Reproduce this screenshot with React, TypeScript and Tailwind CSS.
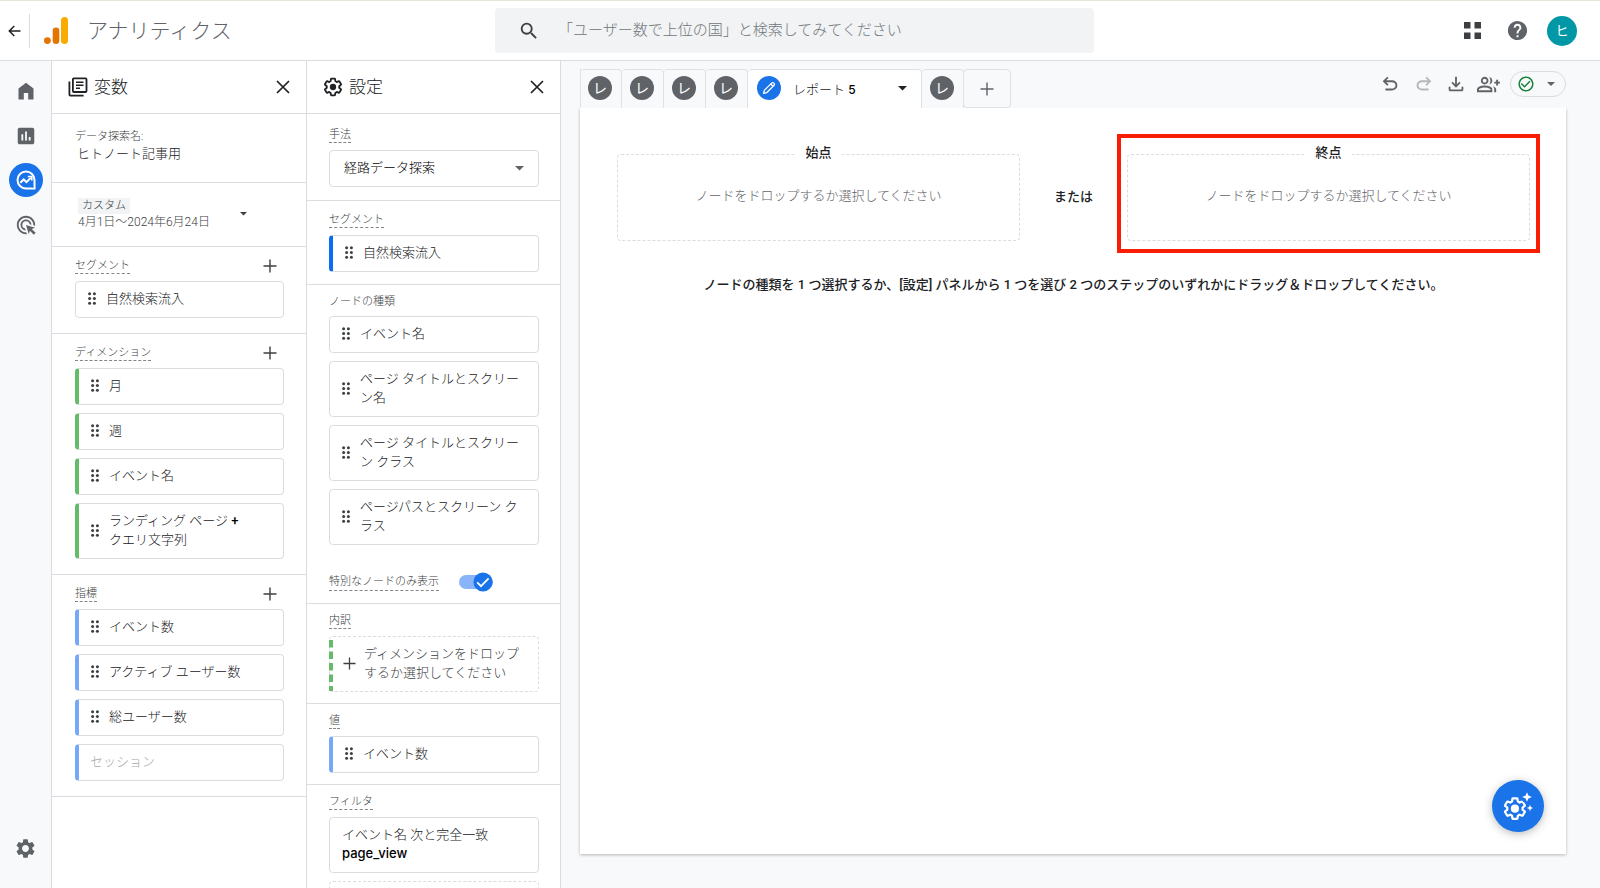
import type { ReactNode } from "react";
import { MdAdsClick, MdCheckCircleOutline, MdHelp, MdInsertChart, MdSearch, MdSettings } from "react-icons/md";

const SANS = "font-[Roboto,'Noto_Sans_CJK_JP',sans-serif]";

function Symbol({ d, className }: { d: string; className?: string }) {
  return (
    <svg viewBox="0 -960 960 960" fill="currentColor" aria-hidden="true" className={className}>
      <path d={d} />
    </svg>
  );
}

const UNDO =
  "M280-200v-80h284q63 0 109.5-40T720-420q0-60-46.5-100T564-560H312l104 104-56 56-200-200 200-200 56 56-104 104h252q97 0 169.5 63T800-420q0 94-72.5 157T564-200H280Z";
const REDO =
  "M396-200q-97 0-169.5-63T154-420q0-94 72.5-157T396-640h252L544-744l56-56 200 200-200 200-56-56 104-104H396q-63 0-109.5 40T240-420q0 60 46.5 100T396-280h284v80H396Z";
const DOWNLOAD =
  "M480-320 280-520l56-58 104 104v-326h80v326l104-104 56 58-200 200ZM240-160q-33 0-56.5-23.5T160-240v-120h80v120h480v-120h80v120q0 33-23.5 56.5T720-160H240Z";
const GROUP_ADD =
  "M500-482q29-32 44.5-73t15.5-85q0-44-15.5-85T500-798q60 8 100 53t40 105q0 60-40 105t-100 53Zm220 322v-120q0-36-16-68.5T662-406q51 18 94.5 46.5T800-280v120h-80Zm80-280v-80h-80v-80h80v-80h80v80h80v80h-80v80h-80Zm-480-40q-66 0-113-47t-47-113q0-66 47-113t113-47q66 0 113 47t47 113q0 66-47 113t-113 47ZM0-160v-112q0-34 17.5-62.5T64-378q62-31 126-46.5T320-440q66 0 130 15.5T576-378q29 15 46.5 43.5T640-272v112H0Zm320-400q33 0 56.5-23.5T400-640q0-33-23.5-56.5T320-720q-33 0-56.5 23.5T240-640q0 33 23.5 56.5T320-560ZM80-240h480v-32q0-11-5.5-20T540-306q-54-27-109-40.5T320-360q-56 0-111 13.5T100-306q-9 5-14.5 14T80-272v32Z";
const GEAR =
  "M19.43 12.98c.04-.32.07-.64.07-.98s-.03-.66-.07-.98l2.11-1.65c.19-.15.24-.42.12-.64l-2-3.46c-.09-.16-.26-.25-.44-.25-.06 0-.12.01-.17.03l-2.49 1c-.52-.4-1.08-.73-1.69-.98l-.38-2.65C14.46 2.18 14.25 2 14 2h-4c-.25 0-.46.18-.49.42l-.38 2.65c-.61.25-1.17.59-1.69.98l-2.49-1c-.06-.02-.12-.03-.18-.03-.17 0-.34.09-.43.25l-2 3.46c-.13.22-.07.49.12.64l2.11 1.65c-.04.32-.07.65-.07.98s.03.66.07.98l-2.11 1.65c-.19.15-.24.42-.12.64l2 3.46c.09.16.26.25.44.25.06 0 .12-.01.17-.03l2.49-1c.52.4 1.08.73 1.69.98l.38 2.65c.03.24.24.42.49.42h4c.25 0 .46-.18.49-.42l.38-2.65c.61-.25 1.17-.59 1.69-.98l2.49 1c.06.02.12.03.18.03.17 0 .34-.09.43-.25l2-3.46c.12-.22.07-.49-.12-.64l-2.11-1.65z";

function GearOutline({ className }: { className?: string }) {
  return (
    <svg viewBox="0 0 24 24" aria-hidden="true" className={className}>
      <path d={GEAR} fill="none" stroke="currentColor" strokeWidth="2.2" strokeLinejoin="round" />
      <circle cx="12" cy="12" r="3.8" fill="currentColor" />
    </svg>
  );
}

function Caret({ className }: { className?: string }) {
  return (
    <svg viewBox="0 0 10 5" fill="currentColor" aria-hidden="true" className={className}>
      <path d="M0 0h10L5 5z" />
    </svg>
  );
}

function Plus({ className }: { className?: string }) {
  return (
    <svg viewBox="0 0 14 14" fill="none" stroke="currentColor" strokeWidth="1.4" aria-hidden="true" className={className}>
      <path d="M7 0.5v13M0.5 7h13" />
    </svg>
  );
}

function Close() {
  return (
    <svg viewBox="0 0 14 14" fill="none" stroke="currentColor" strokeWidth="1.7" aria-hidden="true" className="size-3.5">
      <path d="M1 1l12 12M13 1L1 13" />
    </svg>
  );
}

function Grip() {
  return (
    <svg viewBox="0 0 8 13" fill="#3c4043" aria-hidden="true" className="h-[13px] w-2 shrink-0">
      {[1.6, 6.4].map((x) => [1.7, 6.5, 11.3].map((y) => <circle key={`${x}-${y}`} cx={x} cy={y} r="1.5" />))}
    </svg>
  );
}

const BARS = {
  none: "border-l-[#dadce0]",
  green: "border-l-4 border-l-[#66bb6a]",
  light: "border-l-4 border-l-[#78a6f8]",
  blue: "border-l-4 border-l-[#0b6bf2]",
};

function Chip({ bar = "none", children }: { bar?: keyof typeof BARS; children: ReactNode }) {
  return (
    <button
      type="button"
      className={`flex min-h-[37px] w-full items-center gap-2.5 rounded border border-[#dadce0] bg-white px-3 pt-[7px] pb-[9px] text-left text-[13px] leading-[19px] text-[#202124] ${BARS[bar]}`}
    >
      <Grip />
      <span>{children}</span>
    </button>
  );
}

function Label({ children, plain }: { children: ReactNode; plain?: boolean }) {
  return (
    <span
      className={`block w-fit border-b border-dashed pt-0.5 text-[11px] leading-[14px] text-[#3c4043] ${plain ? "mb-1.5 border-transparent" : "mb-[7px] border-[#80868b]"}`}
    >
      {children}
    </span>
  );
}

function VariableSection({ title, children }: { title: string; children: ReactNode }) {
  return (
    <section className="border-t border-[#dadce0] pt-2.5 pr-[22px] pb-[15px] pl-[23px]">
      <div className="flex items-start justify-between pr-[7px]">
        <Label>{title}</Label>
        <button type="button" aria-label={`${title}を追加`} className="pt-0.5 text-[#3c4043]">
          <Plus className="size-3.5" />
        </button>
      </div>
      <div className="flex flex-col gap-2">{children}</div>
    </section>
  );
}

function PanelHeader({ icon, title }: { icon: ReactNode; title: string }) {
  return (
    <header className="flex h-[52px] items-center gap-1.5 px-4 text-[#202124]">
      {icon}
      <h2 className="flex-1 text-[17px] leading-6">{title}</h2>
      <button type="button" aria-label={`${title}を閉じる`}>
        <Close />
      </button>
    </header>
  );
}

function VariablesPanel() {
  return (
    <aside className="w-[255px] shrink-0 overflow-hidden border-r border-[#dadce0] bg-white">
      <PanelHeader
        title="変数"
        icon={
          <svg viewBox="0 0 20 20" fill="none" stroke="#202124" strokeWidth="1.8" aria-hidden="true" className="size-5">
            <rect x="4.9" y="1.4" width="13.6" height="13.6" rx="1" />
            <path d="M1.4 4.5v13.1a1 1 0 0 0 1 1h13.2" />
            <path d="M8 5.3h7.5M8 8.3h7.5M8 11.3h4" strokeWidth="1.5" />
          </svg>
        }
      />
      <section className="border-t border-[#dadce0] pt-[15px] pr-[22px] pb-[19px] pl-[23px]">
        <p className="text-[11px] leading-4 text-[#3c4043]">データ探索名:</p>
        <p className="pl-0.5 text-[13px] leading-[18px] text-[#202124]">ヒトノート記事用</p>
      </section>
      <section className="border-t border-[#dadce0] pt-[15px] pr-[22px] pb-4 pl-[26px]">
        <button type="button" className="flex items-center gap-[30px] text-left text-[#3c4043]">
          <span>
            <span className="block w-fit bg-[#f1f3f4] px-1 text-[11px] leading-4">カスタム</span>
            <span className="block text-[12px] leading-4">4月1日～2024年6月24日</span>
          </span>
          <Caret className="w-[7px]" />
        </button>
      </section>
      <VariableSection title="セグメント">
        <Chip>自然検索流入</Chip>
      </VariableSection>
      <VariableSection title="ディメンション">
        <Chip bar="green">月</Chip>
        <Chip bar="green">週</Chip>
        <Chip bar="green">イベント名</Chip>
        <Chip bar="green">
          ランディング ページ <span className="font-medium text-black">+</span>
          <br />
          クエリ文字列
        </Chip>
      </VariableSection>
      <VariableSection title="指標">
        <Chip bar="light">イベント数</Chip>
        <Chip bar="light">アクティブ ユーザー数</Chip>
        <Chip bar="light">総ユーザー数</Chip>
        <button
          type="button"
          className="h-[37px] rounded border border-l-4 border-[#dadce0] border-l-[#78a6f8] pb-0.5 pl-[11px] text-left text-[13px] text-[#a5a8ac]"
        >
          セッション
        </button>
      </VariableSection>
      <div className="border-t border-[#dadce0]" />
    </aside>
  );
}

function SettingsPanel() {
  return (
    <aside className="w-[254px] shrink-0 overflow-hidden border-r border-[#dadce0] bg-white">
      <PanelHeader title="設定" icon={<GearOutline className="size-5 text-[#202124]" />} />
      <section className="border-t border-[#dadce0] pt-3 pr-[21px] pb-[13px] pl-[22px]">
        <label htmlFor="technique">
          <Label>手法</Label>
        </label>
        <div className="relative">
          <select
            id="technique"
            className="h-[37px] w-full appearance-none rounded border border-[#dadce0] bg-white pb-0.5 pl-3.5 text-[13px] text-black"
          >
            <option>経路データ探索</option>
          </select>
          <Caret className="pointer-events-none absolute top-4 right-[15px] w-[9px] text-[#5f6368]" />
        </div>
      </section>
      <section className="border-t border-[#dadce0] pt-2.5 pr-[21px] pb-3 pl-[22px]">
        <Label>セグメント</Label>
        <Chip bar="blue">自然検索流入</Chip>
      </section>
      <section className="border-t border-[#dadce0] pt-2 pr-[21px] pb-[11px] pl-[22px]">
        <Label plain>ノードの種類</Label>
        <div className="flex flex-col gap-2">
          <Chip>イベント名</Chip>
          <Chip>ページ タイトルとスクリーン名</Chip>
          <Chip>ページ タイトルとスクリーン クラス</Chip>
          <Chip>ページパスとスクリーン クラス</Chip>
        </div>
        <label className="mt-[27px] flex items-center gap-5">
          <span className="border-b border-dashed border-[#80868b] text-[11px] leading-4 text-[#3c4043]">
            特別なノードのみ表示
          </span>
          <span className="relative flex h-5 items-center">
            <input type="checkbox" defaultChecked className="h-3.5 w-[34px] appearance-none rounded-full bg-[#8ab4f8]" />
            <svg viewBox="0 0 20 20" aria-hidden="true" className="pointer-events-none absolute right-0 size-5">
              <circle cx="10" cy="10" r="9.6" fill="#1a73e8" />
              <path d="M4.2 10.4l3.8 3.8 7.6-7.8" fill="none" stroke="#fff" strokeWidth="1.8" />
            </svg>
          </span>
        </label>
      </section>
      <section className="border-t border-[#dadce0] pt-2 pr-[21px] pb-[11px] pl-[22px]">
        <Label>内訳</Label>
        <button
          type="button"
          className="flex w-full items-center rounded border border-dashed border-[#dadce0] text-left text-[13px] leading-[19px] text-[#3c4043]"
        >
          <svg viewBox="0 0 4 54" aria-hidden="true" className="-ml-px h-[54px] w-1 shrink-0">
            <path d="M2 3v52" stroke="#66bb6a" strokeWidth="4" strokeDasharray="7.5 4" />
          </svg>
          <span className="flex items-center gap-2 pt-[7px] pb-[9px] pl-2.5">
            <Plus className="size-[13px] shrink-0" />
            <span>
              ディメンションをドロップ
              <br />
              するか選択してください
            </span>
          </span>
        </button>
      </section>
      <section className="border-t border-[#dadce0] pt-2 pr-[21px] pb-[11px] pl-[22px]">
        <Label>値</Label>
        <Chip bar="light">イベント数</Chip>
      </section>
      <section className="border-t border-[#dadce0] pt-2 pr-[21px] pb-3 pl-[22px]">
        <Label>フィルタ</Label>
        <button
          type="button"
          className="w-full rounded border border-[#dadce0] px-3 pt-[7px] pb-[9px] text-left text-[13px] leading-[19px] text-[#202124]"
        >
          イベント名 次と完全一致
          <br />
          <span className="font-[Inter,sans-serif] font-medium text-black">page_view</span>
        </button>
        <div className="mt-2 h-[37px] rounded border border-dashed border-[#dadce0]" />
      </section>
    </aside>
  );
}

function ReportTab() {
  return (
    <button
      type="button"
      aria-label="レポート"
      className="flex w-[42px] justify-center rounded-t border border-b-0 border-l-0 border-[#dfe1e5] pt-1.5 pr-px"
    >
      <span className="flex size-6 items-center justify-center rounded-full bg-[#5f6368] text-[14px] font-normal text-white">
        レ
      </span>
    </button>
  );
}

function DropZone({ title, highlighted }: { title: string; highlighted?: boolean }) {
  return (
    <fieldset className="relative h-[87px] min-w-0 flex-1">
      <div className="absolute inset-0 rounded border border-dashed border-[#dadce0]" />
      <legend className="absolute -top-[11px] left-1/2 -translate-x-1/2 bg-white px-2.5 text-[13px] leading-5 font-medium text-[#202124]">
        {title}
      </legend>
      <button type="button" className="relative size-full pb-1 text-[13px] leading-5 text-[#5f6368]">
        ノードをドロップするか選択してください
      </button>
      {highlighted && (
        <div className="pointer-events-none absolute -top-5 -right-2.5 -bottom-3 -left-2.5 border-4 border-[#f91d06]" />
      )}
    </fieldset>
  );
}

function Workspace() {
  return (
    <main className="flex min-w-0 flex-1 flex-col pr-[34px] pb-[34px] pl-[19px]">
      <div className="flex h-[47px] shrink-0 items-stretch pt-2">
        <div className="flex shadow-[inset_1px_0_0_#dfe1e5]">
          <ReportTab />
          <ReportTab />
          <ReportTab />
          <ReportTab />
        </div>
        <button
          type="button"
          className="flex w-[174px] items-start rounded-t border-t border-r border-[#dfe1e5] bg-white pt-1.5 pr-3.5 pl-[9px] text-[13px] text-[#202124]"
        >
          <span className="flex size-6 items-center justify-center rounded-full bg-[#1a73e8]">
            <svg viewBox="0 0 14 14" fill="none" stroke="#fff" strokeWidth="1.3" strokeLinejoin="round" aria-hidden="true" className="size-3.5">
              <path d="M1.6 12.4l.7-3L9.8 1.9a1.2 1.2 0 0 1 1.7 0l.6.6a1.2 1.2 0 0 1 0 1.7L4.6 11.7zM8.7 3l2.3 2.3" />
            </svg>
          </span>
          <span className="flex-1 pl-3 text-left leading-7">
            レポート <span className="font-[Inter,sans-serif] text-[12px] font-medium text-black">5</span>
          </span>
          <Caret className="mt-2.5 w-[9px]" />
        </button>
        <ReportTab />
        <button
          type="button"
          aria-label="レポートを追加"
          className="-ml-px flex w-12 items-center justify-center rounded border border-[#dfe1e5] text-[#5f6368]"
        >
          <Plus className="size-3.5" />
        </button>
        <div className="ml-auto flex h-[30px] items-center text-[#5f6368]">
          <button type="button" aria-label="元に戻す" className="mr-3">
            <Symbol d={UNDO} className="size-[22px]" />
          </button>
          <button type="button" aria-label="やり直す" className="mr-2.5 text-[#b4b7bb]">
            <Symbol d={REDO} className="size-[22px]" />
          </button>
          <button type="button" aria-label="ダウンロード" className="mr-2.5">
            <Symbol d={DOWNLOAD} className="size-[22px]" />
          </button>
          <button type="button" aria-label="共有" className="mr-2.5">
            <Symbol d={GROUP_ADD} className="size-[23px]" />
          </button>
          <button
            type="button"
            aria-label="ステータス"
            className="flex h-[26px] w-14 items-center gap-3 rounded-full border border-[#dadce0] pl-1.5"
          >
            <MdCheckCircleOutline className="size-[18px] text-[#188038]" />
            <Caret className="w-2" />
          </button>
        </div>
      </div>
      <div className="relative min-h-0 flex-1 bg-white pt-[46px] pr-9 pl-[37px] shadow-[0_1px_3px_rgba(60,64,67,0.35)] [clip-path:inset(0_-4px_-4px_-4px)]">
        <div className="flex items-center">
          <DropZone title="始点" />
          <span className="w-[107px] shrink-0 pb-0.5 text-center text-[13px] leading-5 font-medium text-[#202124]">
            または
          </span>
          <DropZone title="終点" highlighted />
        </div>
        <p className="mt-[34px] text-center text-[13px] leading-5 font-medium text-[#202124]">
          ノードの種類を 1 つ選択するか、[設定] パネルから 1 つを選び 2 つのステップのいずれかにドラッグ＆ドロップしてください。
        </p>
        <button
          type="button"
          aria-label="設定アシスト"
          className="absolute right-[22px] bottom-[22px] flex size-[52px] items-center justify-center rounded-full bg-[#1a73e8] text-white shadow-[0_2px_8px_rgba(60,64,67,0.35)]"
        >
          <svg viewBox="0 0 30 30" aria-hidden="true" className="size-[30px]">
            <g transform="translate(-.3 5.4) scale(1.02)">
              <path d={GEAR} fill="none" stroke="#fff" strokeWidth="2.2" strokeLinejoin="round" />
              <circle cx="12" cy="12" r="4" fill="#fff" />
            </g>
            <circle cx="24" cy="6" r="6" fill="#1a73e8" />
            <path d="M24 1.2l1.4 3.4 3.4 1.4-3.4 1.4L24 10.8l-1.4-3.4L19.200 6l3.400-1.400zM27 13.800l.9 2.300 2.300.9-2.300.9L27 20.200l-.9-2.300L23.800 17l2.300-.9z" fill="#fff" />
          </svg>
        </button>
      </div>
    </main>
  );
}

function TopBar() {
  return (
    <header className="flex h-[61px] shrink-0 items-center border-t border-b border-t-[#e3e4da] border-b-[#dadce0] bg-white">
      <div className="flex w-[495px] shrink-0 items-center">
        <button type="button" aria-label="戻る" className="ml-2">
          <svg viewBox="0 0 13 12" fill="none" stroke="#202124" strokeWidth="1.5" aria-hidden="true" className="h-3 w-[13px]">
            <path d="M12.5 6h-11M6.3 1l-5 5 5 5" />
          </svg>
        </button>
        <span className="ml-2 h-[34px] border-l border-[#dadce0]" />
        <svg viewBox="0 0 24 27" aria-hidden="true" className="ml-3.5 h-[27px] w-6">
          <rect x="17" y="0" width="7" height="27" rx="3.5" fill="#f9ab00" />
          <rect x="8.7" y="10.5" width="6.6" height="16.5" rx="3.3" fill="#e37400" />
          <circle cx="3.4" cy="23.6" r="3.4" fill="#e37400" />
        </svg>
        <h1 className="ml-[19px] text-[21px] leading-8 text-[#5f6368]">アナリティクス</h1>
      </div>
      <label className="flex h-[45px] w-[599px] items-center rounded bg-[#f1f3f4]">
        <MdSearch className="mr-[18px] ml-[23px] size-[22px] text-[#3c4043]" aria-label="検索" />
        <input
          type="text"
          placeholder="「ユーザー数で上位の国」と検索してみてください"
          className="min-w-0 flex-1 bg-transparent text-[15px] outline-none placeholder:text-[#70757a]"
        />
      </label>
      <div className="mr-[23px] ml-auto flex items-center">
        <button type="button" aria-label="アプリ">
          <svg viewBox="0 0 17 17" fill="#3c4043" aria-hidden="true" className="size-[17px]">
            <path d="M0 0h6.5v6.500H0zM10.500 0H17v6.500h-6.500zM0 10.500h6.500V17H0zM10.500 10.500H17V17h-6.500z" />
          </svg>
        </button>
        <button type="button" aria-label="ヘルプ" className="mr-[18px] ml-[25px] text-[#5f6368]">
          <MdHelp className="size-[23px]" />
        </button>
        <button
          type="button"
          aria-label="アカウント"
          className="flex size-[30px] items-center justify-center rounded-full bg-[#0097a7] text-[13px] font-normal text-white"
        >
          ヒ
        </button>
      </div>
    </header>
  );
}

function SideNav() {
  return (
    <nav className="flex w-[52px] shrink-0 flex-col items-center border-r border-[#dadce0] pt-[19px] pb-7 text-[#5f6368]">
      <a href="#home" aria-label="ホーム">
        <svg viewBox="0 0 22 22" fill="currentColor" aria-hidden="true" className="size-[22px]">
          <path d="M3.5 19.5V8.500L11 2.800l7.500 5.700v11h-5.300v-6.600H8.800v6.600z" />
        </svg>
      </a>
      <a href="#reports" aria-label="レポート" className="mt-[23px]">
        <MdInsertChart className="size-[22px]" />
      </a>
      <a
        href="#explore"
        aria-label="探索"
        className="mt-4 flex size-[34px] items-center justify-center rounded-full bg-[#1a73e8]"
      >
        <svg viewBox="0 0 20 20" fill="none" stroke="#fff" strokeWidth="2" aria-hidden="true" className="size-5">
          <path d="M10 1.500a8.500 8.500 0 1 0 0 17h8.500V10A8.500 8.500 0 0 0 10 1.500z" />
          <path d="M4.300 12.700l3.400-3.200 2.800 2.700 4.200-4.400" />
          <path d="M11.800 6.500h4v4" strokeWidth="1.6" />
          <circle cx="16.600" cy="16.600" r=".9" fill="#1a73e8" stroke="none" />
        </svg>
      </a>
      <a href="#ads" aria-label="広告" className="mt-[17px]">
        <MdAdsClick className="size-[22px]" />
      </a>
      <a href="#admin" aria-label="管理" className="mt-auto">
        <MdSettings className="size-[23px]" />
      </a>
    </nav>
  );
}

export default function App() {
  return (
    <div lang="ja" className={`flex h-screen flex-col overflow-hidden bg-[#f8f9fa] font-light ${SANS}`}>
      <TopBar />
      <div className="flex min-h-0 flex-1">
        <SideNav />
        <VariablesPanel />
        <SettingsPanel />
        <Workspace />
      </div>
    </div>
  );
}
